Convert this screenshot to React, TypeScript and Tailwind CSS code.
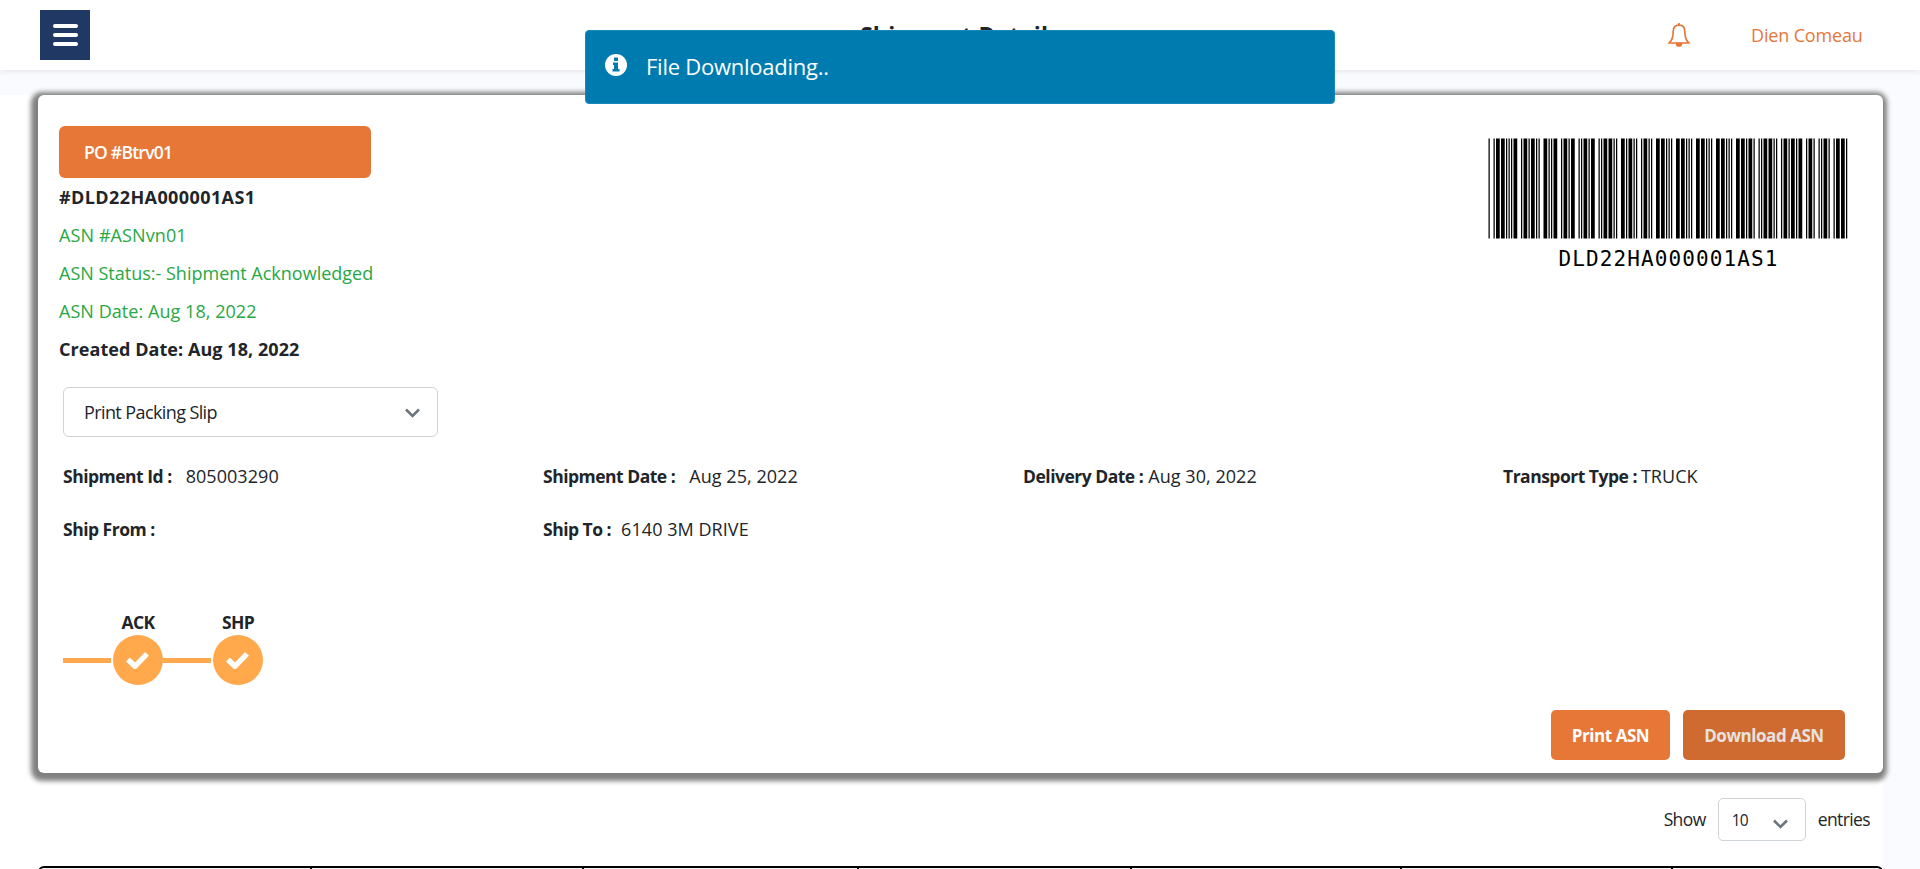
import React from "react";

const CODE39: Record<string, string> = {
  "0": "nnnwwnwnn",
  "1": "wnnwnnnnw",
  "2": "nnwwnnnnw",
  A: "wnnnnwnnw",
  D: "nnnnwwnnw",
  H: "wnnnnwwnn",
  L: "nnwnnnnww",
  S: "nnwnnnwwn",
  "*": "nwnnwnwnn",
};

const Barcode = ({ value }: { value: string }) => {
  const bars: { x: number; w: number }[] = [];
  let pos = 0;
  for (const ch of `*${value}*`) {
    const pattern = CODE39[ch];
    for (let i = 0; i < pattern.length; i++) {
      const w = pattern[i] === "w" ? 3 : 1;
      if (i % 2 === 0) bars.push({ x: pos, w });
      pos += w;
    }
    pos += 1;
  }
  return (
    <svg className="block h-[101px] w-[361px]" viewBox="0 0 361 101">
      <g transform="translate(0.5 0.5) scale(1.25 1)">
        {bars.map((b) => (
          <rect key={b.x} x={b.x} y={0} width={b.w} height={100} />
        ))}
      </g>
    </svg>
  );
};

const Chevron = () => (
  <svg className="h-[10px] w-[15px]" viewBox="0 0 15 10" fill="none" stroke="#6c757d" strokeWidth="2.6">
    <path d="M1 1.5l6.5 6.5 6.5-6.5" />
  </svg>
);

const Step = ({ label }: { label: string }) => (
  <div className="flex">
    <div className="mt-[48px] mr-[2px] h-[5px] w-[48px] bg-[#ffa94c]" />
    <div className="flex w-[50px] flex-col items-center">
      <span className="h-[25px] whitespace-nowrap text-[17.5px] leading-[24px] font-bold tracking-[-0.6px]">{label}</span>
      <div className="flex size-[50px] shrink-0 items-center justify-center rounded-full bg-[#ffa94c]">
        <svg className="mr-[2px] h-[17px] w-[23px]" viewBox="0 0 23 17" fill="none" stroke="#fff" strokeWidth="5.4">
          <path d="M1.9 7.5l7 6.8L21 1.9" strokeLinejoin="miter" />
        </svg>
      </div>
    </div>
  </div>
);

const Field = ({ label, value, gap }: { label: string; value: string; gap: string }) => (
  <div className="flex w-[480px] shrink-0 whitespace-pre">
    <span className="text-[17.5px] font-bold tracking-[-0.5px]">{label}</span>
    <span className={`${gap} tracking-[0.05px]`}>{value}</span>
  </div>
);

export default function App() {
  return (
    <div className="relative flex h-[869px] w-[1920px] flex-col overflow-hidden bg-[#fafbff] font-['Open_Sans',sans-serif] text-[18px] leading-[25px] text-[#212529]">
      <header className="z-10 flex h-[70px] shrink-0 items-center bg-white shadow-[0_2px_5px_rgba(0,0,0,0.08)]">
        <div className="ml-[40px] flex size-[50px] flex-col items-center justify-center gap-[5px] bg-[#203864]">
          <i className="h-[4px] w-[25px] rounded-full bg-white" />
          <i className="h-[4px] w-[25px] rounded-full bg-white" />
          <i className="h-[4px] w-[25px] rounded-full bg-white" />
        </div>
        <h1 className="ml-[770px] w-[239px] whitespace-nowrap text-[23px] leading-[30px] font-bold tracking-[0.2px]">Shipment Details</h1>
        <svg className="ml-[569px] h-[24px] w-[22px]" viewBox="0 0 22 24" fill="none" stroke="#e67737" strokeWidth="1.7">
          <path d="M11 2.2C7 2.2 5.2 5 5.2 8.5c0 5.5-1.2 9-4 11.5h19.6c-2.8-2.5-4-6-4-11.5C16.800 5 15 2.2 11 2.2z" />
          <path d="M11 0v2M8.5 20.5a2.5 2.5 0 0 0 5 0z" fill="#e67737" />
        </svg>
        <span className="ml-[61px] whitespace-nowrap tracking-[-0.15px] text-[#e67737]">Dien Comeau</span>
      </header>

      <main className="mt-[25px] flex w-[1883px] grow flex-col bg-white">
        <section className="ml-[38px] flex h-[678px] w-[1845px] shrink-0 flex-col rounded-[6px] bg-white shadow-[-1.25px_2.5px_5px_5px_gray]">
          <div className="flex h-[292px] justify-between pr-[34px] pl-[21px]">
            <div className="flex flex-col">
              <div className="mt-[31px] flex h-[52px] w-[312px] shrink-0 items-center rounded-[6px] bg-[#e67737] pl-[25px] text-[17.5px] font-semibold text-white">
                <span className="tracking-[-0.75px]">PO #Btrv01</span>
              </div>
              <div className="flex flex-col leading-[38px] text-[#28a745]">
                <span className="font-bold tracking-[0.4px] text-[#212529]">#DLD22HA000001AS1</span>
                <span className="tracking-[0.1px]">ASN #ASNvn01</span>
                <span>ASN Status:- Shipment Acknowledged</span>
                <span className="tracking-[0.05px]">ASN Date: Aug 18, 2022</span>
                <span className="font-bold tracking-[0.06px] text-[#212529]">Created Date: Aug 18, 2022</span>
              </div>
            </div>
            <div className="flex flex-col items-center pt-[43px]">
              <Barcode value="DLD22HA000001AS1" />
              <span className="mt-[6px] font-['DejaVu_Sans_Mono',monospace] text-[21px] leading-[28px] tracking-[1.1px] text-black">DLD22HA000001AS1</span>
            </div>
          </div>
          <div className="flex flex-col pl-[25px]">
            <div className="flex h-[50px] w-[375px] items-center justify-between rounded-[6px] border border-[#ced4da] pr-[17px] pl-[20px]">
              <span className="tracking-[-0.6px]">Print Packing Slip</span>
              <div className="pt-[2px]"><Chevron /></div>
            </div>
            <div className="mt-[27px] flex">
              <Field label="Shipment Id :" value="805003290" gap="ml-[14px]" />
              <Field label="Shipment Date :" value="Aug 25, 2022" gap="ml-[14px]" />
              <Field label="Delivery Date :" value="Aug 30, 2022" gap="ml-[5px]" />
              <Field label="Transport Type :" value="TRUCK" gap="ml-[4px]" />
            </div>
            <div className="mt-[28px] flex">
              <Field label="Ship From :" value="" gap="ml-0" />
              <Field label="Ship To :" value="6140 3M DRIVE" gap="ml-[10px]" />
            </div>
            <div className="mt-[68px] flex">
              <Step label="ACK" />
              <Step label="SHP" />
            </div>
          </div>
          <div className="mt-[25px] flex justify-end gap-[13px] pr-[38px] text-[17px] font-bold tracking-[-0.45px] text-white">
            <div className="flex h-[50px] w-[119px] items-center justify-center rounded-[5px] bg-[#e67737] whitespace-nowrap">Print ASN</div>
            <div className="flex h-[50px] w-[162px] items-center justify-center rounded-[5px] bg-[#cf6b31] whitespace-nowrap text-[#e7e2df]">Download ASN</div>
          </div>
        </section>
        <div className="mt-[25px] flex h-[43px] shrink-0 items-center justify-end pr-[13px] text-[17.5px]">
          <span className="tracking-[-0.6px]">Show</span>
          <div className="mx-[12px] flex h-[43px] w-[88px] items-center justify-between rounded-[5px] border border-[#ced4da] pr-[17px] pl-[13px] text-[15.5px]">
            <span className="pt-[2px] tracking-[-0.8px]">10</span>
            <div className="pt-[8px]"><Chevron /></div>
          </div>
          <span className="tracking-[-0.6px]">entries</span>
        </div>
        <div className="mt-[25px] ml-[38px] flex h-[60px] w-[1845px] shrink-0 overflow-hidden rounded-[6px] border-2 border-black bg-[#f2f2f2]">
          <div className="w-[272px] border-r-2 border-black" />
          <div className="w-[272px] border-r-2 border-black" />
          <div className="w-[275px] border-r-2 border-black" />
          <div className="w-[273px] border-r-2 border-black" />
          <div className="w-[270px] border-r-2 border-black" />
          <div className="w-[271px] border-r-2 border-black" />
        </div>
      </main>

      <div className="absolute top-[30px] left-[585px] z-20 flex h-[74px] w-[750px] items-center rounded-[4px] border border-[#1a88b8] bg-[#007bb0] pl-[19px] text-white">
        <svg className="mb-[4px] size-[22px]" viewBox="0 0 22 22">
          <circle cx="11" cy="11" r="11" fill="#fff" />
          <path d="M9 3.5h4v3.5H9zM8 8.5h5v6.5h1.500v2.5h-7V15H9v-4H8z" fill="#007bb0" />
        </svg>
        <span className="mb-[2px] ml-[19px] text-[22px] leading-[30px] tracking-[-0.25px]">File Downloading..</span>
      </div>
    </div>
  );
}
